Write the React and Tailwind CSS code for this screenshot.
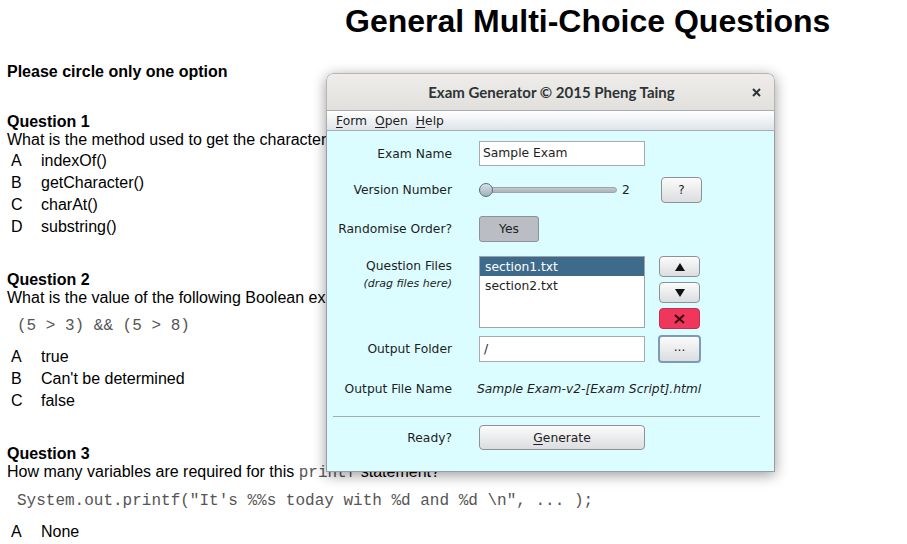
import React from "react";

const q1 = [
  ["A", "indexOf()"],
  ["B", "getCharacter()"],
  ["C", "charAt()"],
  ["D", "substring()"],
];
const q2 = [
  ["A", "true"],
  ["B", "Can't be determined"],
  ["C", "false"],
];
const q3 = [["A", "None"]];

const Options = ({ items }) => {
  return (
    <div className="pl-[4px]">
      {items.map((o, i) => (
        <div key={i} className="flex h-[22px] items-center">
          <span className="w-[30px]">{o[0]}</span>
          <span>{o[1]}</span>
        </div>
      ))}
    </div>
  );
};

const Code = ({ children }) => {
  return (
    <div className="ml-[10px] mt-[10px] mb-[11px] font-['Liberation_Mono',monospace] text-[16px] leading-[18px] text-[#555] whitespace-pre">
      {children}
    </div>
  );
};

const Btn = ({ className, children }) => {
  return (
    <div
      className={
        "flex items-center justify-center rounded-[4px] border border-[#8e9194] bg-gradient-to-b from-[#fbfbfb] to-[#dcdde0] text-[#222] " +
        className
      }
    >
      {children}
    </div>
  );
};

const Dialog = () => {
  return (
    <div className="absolute left-[326px] top-[73px] flex h-[399px] w-[449px] flex-col overflow-hidden rounded-t-[7px] font-['DejaVu_Sans',sans-serif] text-[12.3px] text-[#1e1e1e] shadow-[0_3px_14px_rgba(0,0,0,0.4)]">
      {/* title bar */}
      <div className="relative flex h-[37px] items-center justify-center rounded-t-[7px] border border-b-0 border-[#b8b6b2] bg-gradient-to-b from-[#eeedeb] to-[#e2e0dc] pl-[2px] font-['Lato',sans-serif] text-[15px] font-bold text-[#2e3436]">
        Exam Generator © 2015 Pheng Taing
        <svg className="absolute right-[13px] top-[14px]" width="9" height="9" viewBox="0 0 9 9">
          <path d="M1 1L8 8M8 1L1 8" stroke="#2e3436" strokeWidth="2" />
        </svg>
      </div>
      {/* menu bar */}
      <div className="flex h-[21px] items-center gap-[8px] border border-[#a9acb0] bg-gradient-to-b from-[#ffffff] to-[#dfe4ea] pl-[9px] pt-[1px] text-[12.3px]">
        <span>
          <span className="underline underline-offset-2">F</span>orm
        </span>
        <span>
          <span className="underline underline-offset-2">O</span>pen
        </span>
        <span>
          <span className="underline underline-offset-2">H</span>elp
        </span>
      </div>
      {/* body */}
      <div className="flex flex-1 flex-col border-x border-b border-[#9a9d9f] bg-[#dbfdff] pt-[10px]">
        <div className="flex h-[25px] items-center">
          <div className="w-[125px] pt-[1px] text-right">Exam Name</div>
          <div className="ml-[27px] flex h-[25px] w-[166px] items-center border border-[#a8abab] bg-white pl-[3px]">
            Sample Exam
          </div>
        </div>

        <div className="mt-[11px] flex h-[26px] items-center">
          <div className="w-[125px] text-right">Version Number</div>
          <div className="relative ml-[27px] flex h-[26px] w-[138px] items-center">
            <div className="h-[6px] w-full rounded-full border border-[#9ea4aa] bg-gradient-to-b from-[#c4c8cc] to-[#aeb3b8]"></div>
            <div className="absolute left-0 top-[6px] h-[14px] w-[14px] rounded-full border border-[#5f6d7a] bg-gradient-to-b from-[#d9e1e8] to-[#9fb0bf]"></div>
          </div>
          <div className="ml-[5px] w-[39px]">2</div>
          <Btn className="h-[26px] w-[41px] text-[12px]">?</Btn>
        </div>

        <div className="mt-[13px] flex h-[26px] items-center">
          <div className="w-[125px] text-right">Randomise Order?</div>
          <div className="ml-[27px] flex h-[26px] w-[60px] items-center justify-center rounded-[3px] border border-[#8e9297] bg-[#babdc3]">
            Yes
          </div>
        </div>

        <div className="mt-[14px] flex">
          <div className="w-[125px] pt-[1px] text-right leading-[18px]">
            <div>Question Files</div>
            <div className="text-[11px] italic">(drag files here)</div>
          </div>
          <div className="ml-[27px] h-[72px] w-[166px] border border-[#a0a4a6] bg-white">
            <div className="flex h-[19px] items-center bg-[#3e6b8c] pl-[5px] pt-[1px] text-white">section1.txt</div>
            <div className="flex h-[19px] items-center pl-[5px] pt-[1px]">section2.txt</div>
          </div>
          <div className="ml-[14px] flex flex-col gap-[5px]">
            <Btn className="h-[21px] w-[41px]">
              <svg width="10" height="8" viewBox="0 0 10 8">
                <path d="M5 0L10 8H0Z" fill="#111" />
              </svg>
            </Btn>
            <Btn className="h-[21px] w-[41px]">
              <svg width="10" height="8" viewBox="0 0 10 8">
                <path d="M0 0H10L5 8Z" fill="#111" />
              </svg>
            </Btn>
            <div className="flex h-[21px] w-[41px] items-center justify-center rounded-[4px] border border-[#c0304f] bg-[#f0365c]">
              <svg width="11" height="10" viewBox="0 0 11 10">
                <path d="M1 1L10 9M10 1L1 9" stroke="#3a0c12" strokeWidth="2.2" />
              </svg>
            </div>
          </div>
        </div>

        <div className="mt-[6px] flex h-[28px] items-center">
          <div className="w-[125px] pt-[1px] text-right">Output Folder</div>
          <div className="ml-[27px] flex h-[26px] w-[166px] items-center border border-[#a8abab] bg-white pl-[4px]">
            /
          </div>
          <div className="ml-[13px] flex h-[28px] w-[43px] items-center justify-center rounded-[4px] border-2 border-[#7b9bb8] bg-gradient-to-b from-[#fbfbfb] to-[#dcdde0] pb-[4px]">
            ...
          </div>
        </div>

        <div className="mt-[16px] flex h-[20px] items-center">
          <div className="w-[125px] pt-[1px] text-right">Output File Name</div>
          <div className="ml-[25px] pt-[1px] italic">Sample Exam-v2-[Exam Script].html</div>
        </div>

        <div className="ml-[6px] mr-[14px] mt-[17px] h-px bg-[#a5adad]"></div>

        <div className="mt-[8px] flex h-[25px] items-center">
          <div className="w-[125px] pt-[1px] text-right">Ready?</div>
          <Btn className="ml-[27px] h-[25px] w-[166px] pt-[1px]">
            <span>
              <span className="underline underline-offset-2">G</span>enerate
            </span>
          </Btn>
        </div>
      </div>
    </div>
  );
};

export default function App() {
  return (
    <div className="relative h-[544px] w-[907px] overflow-hidden bg-white font-['Liberation_Sans',Arial,sans-serif] text-[16px] text-black">
      <div className="pl-[7px] pt-[1px]">
        <h1 className="ml-[338px] mt-[1px] text-[32px] font-bold leading-[38px]">General Multi-Choice Questions</h1>
        <div className="mt-[23px] font-bold leading-[18px]">Please circle only one option</div>

        <div className="mt-[32px] font-bold leading-[18px]">Question 1</div>
        <div className="leading-[18px]">What is the method used to get the character at a given index in a String?</div>
        <div className="mt-px">
          <Options items={q1} />
        </div>

        <div className="mt-[33px] font-bold leading-[18px]">Question 2</div>
        <div className="leading-[18px]">What is the value of the following Boolean expression?</div>
        <Code>(5 &gt; 3) &amp;&amp; (5 &gt; 8)</Code>
        <Options items={q2} />

        <div className="mt-[33px] font-bold leading-[18px]">Question 3</div>
        <div className="leading-[18px]">
          How many variables are required for this{" "}
          <span className="font-['Liberation_Mono',monospace] text-[#555]">printf</span> statement?
        </div>
        <Code>System.out.printf("It's %%s today with %d and %d \n", ... );</Code>
        <Options items={q3} />
      </div>
      <Dialog />
    </div>
  );
}
